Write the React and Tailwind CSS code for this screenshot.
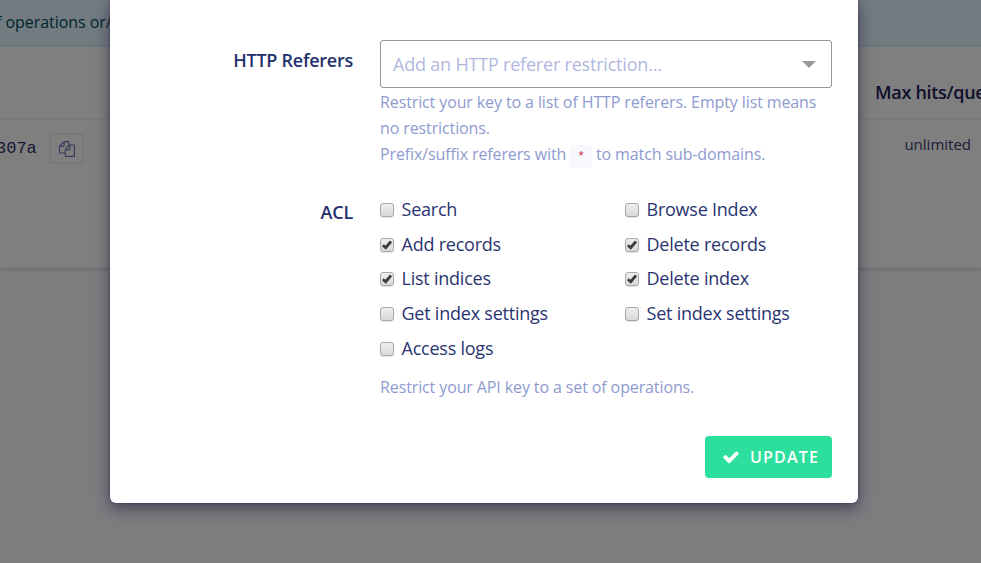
const operations = [
  ["Search", false],
  ["Browse Index", false],
  ["Add records", true],
  ["Delete records", true],
  ["List indices", true],
  ["Delete index", true],
  ["Get index settings", false],
  ["Set index settings", false],
  ["Access logs", false],
];

function CopyIcon() {
  return (
    <svg className="size-4" viewBox="0 0 1792 1792" fill="currentColor">
      <path d="M1696 384q40 0 68 28t28 68v1216q0 40-28 68t-68 28h-960q-40 0-68-28t-28-68v-288h-544q-40 0-68-28t-28-68v-672q0-40 20-88t48-76l408-408q28-28 76-48t88-20h416q40 0 68 28t28 68v328q68-40 128-40h416zm-544 213l-299 299h299v-299zm-640-384l-299 299h299v-299zm196 647l316-316v-416h-384v416q0 40-28 68t-68 28h-416v640h512v-256q0-40 20-88t48-76zm956 804v-1152h-384v416q0 40-28 68t-68 28h-416v640h896z" />
    </svg>
  );
}

function CheckIcon() {
  return (
    <svg className="size-[18px]" viewBox="0 0 1792 1792" fill="currentColor">
      <path d="M1671 566q0 40-28 68l-724 724-136 136q-28 28-68 28t-68-28l-136-136-362-362q-28-28-28-68t28-68l136-136q28-28 68-28t68 28l294 295 656-657q28-28 68-28t68 28l136 136q28 28 28 68z" />
    </svg>
  );
}

function Checkbox({ label, checked }) {
  return (
    <label className="flex h-[34.7px] items-center text-lg tracking-[-0.23px] text-[#2a3570]">
      <span className="mt-[2px] mr-[7.5px] flex size-[14px] shrink-0 items-center justify-center rounded-[3px] border border-[#a9a9a9] bg-linear-to-b from-[#eeeeee] to-[#d9d9d9] shadow-[0_1px_1px_rgba(0,0,0,0.12)]">
        {checked && (
          <svg className="size-[10px]" viewBox="0 0 10 10" fill="none" stroke="#3c3c3c" strokeWidth="2.8">
            <path d="M0.8 5.2 3.7 7.7 9 1.5" />
          </svg>
        )}
      </span>
      {label}
    </label>
  );
}

function ApiKeysPage() {
  return (
    <div className="h-full">
      <div className="h-[47px] bg-[#e5f7ff] pt-[10px] text-base leading-6 text-[#004b63]">
        <span className="-ml-[4px] tracking-[-0.05px]">f operations or/</span>
      </div>
      <div className="h-[221px] bg-white shadow-[0_1px_5px_rgba(60,60,90,0.25)]">
        <div className="flex h-[73px] items-end justify-end overflow-hidden border-b border-[#efeff8]">
          <div className="h-[41px] w-[106px] text-lg leading-7 font-semibold tracking-[-0.3px] whitespace-nowrap text-[#1c2159]">Max hits/query</div>
        </div>
        <div className="flex justify-between pt-[13px]">
          <div className="flex items-center">
            <span className="-ml-[4px] w-[53px] font-['Liberation_Mono'] text-[17px] text-[#2c3169]">307a</span>
            <span className="flex h-[31px] w-[35px] items-center justify-center rounded border-2 border-[#f0f0fa] text-[#7078b4]">
              <CopyIcon />
            </span>
          </div>
          <span className="mr-[10px] -mt-px text-[15px] leading-6 text-[#3c4270]">unlimited</span>
        </div>
      </div>
    </div>
  );
}

export default function App() {
  return (
    <div className="relative h-[563px] w-[981px] overflow-hidden bg-[#fafbff] font-['Open_Sans',sans-serif]">
      <ApiKeysPage />
      <div className="absolute inset-0 bg-black/50 pl-[110px]">
        <div className="h-[503px] w-[748px] rounded-b-[6px] bg-white pt-10 pr-[26px] shadow-[0_5px_15px_rgba(31,21,61,0.6),0_0_2px_rgba(31,21,61,0.6)]">
          <section className="flex">
            <div className="mr-[27px] w-[243px] pt-[6px] text-right text-lg leading-7 font-semibold tracking-[-0.25px] text-[#242f6d]">HTTP Referers</div>
            <div className="w-[452px]">
              <div className="flex h-12 items-center justify-between rounded-[3px] border border-[#999] pr-[15px] pl-3 text-lg tracking-[-0.2px] text-[#b0b8e0]">
                Add an HTTP referer restriction...
                <span className="border-x-[7px] border-t-[7px] border-x-transparent border-t-[#999]" />
              </div>
              <p className="pt-px text-base leading-[26px] tracking-[-0.115px] whitespace-nowrap text-[#8e9bd0]">
                Restrict your key to a list of HTTP referers. Empty list means
                <br />
                no restrictions.
                <br />
                Prefix/suffix referers with{" "}
                <code className="rounded bg-[#f7f8fc] px-[7px] py-[4px] font-['Liberation_Mono'] text-[13px] text-[#c7254e]">*</code>{" "}
                to match sub-domains.
              </p>
            </div>
          </section>
          <section className="mt-[21px] flex">
            <div className="mr-[27px] w-[243px] pt-[7px] text-right text-lg leading-7 font-semibold tracking-[-0.2px] text-[#242f6d]">ACL</div>
            <div className="w-[452px]">
              <div className="grid grid-cols-[245px_1fr] pt-[0.5px]">
                {operations.map(([label, checked]) => (
                  <Checkbox key={label} label={label} checked={checked} />
                ))}
              </div>
              <p className="mt-[9px] text-base leading-[26px] tracking-[-0.115px] text-[#8e9bd0]">Restrict your API key to a set of operations.</p>
            </div>
          </section>
          <div className="mt-9 flex justify-end">
            <button className="flex h-[42px] w-[127px] items-center rounded bg-[#2cdf9c] pl-[17px] text-base font-semibold tracking-[1.2px] text-white">
              <CheckIcon />
              <span className="ml-[10px]">UPDATE</span>
            </button>
          </div>
        </div>
      </div>
    </div>
  );
}
